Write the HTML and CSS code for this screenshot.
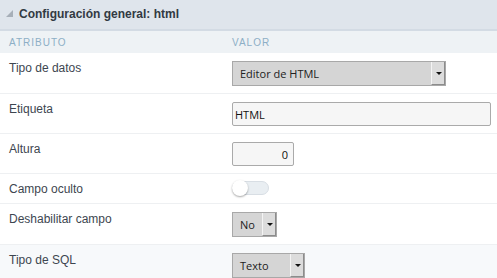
FILE: index.html
```html
<!DOCTYPE html>
<html lang="es">
<head>
    <meta charset="UTF-8">
    <meta name="viewport" content="width=device-width, initial-scale=1.0">
    <title>Configuración general: html</title>
    <link rel="stylesheet" href="styles.css">
</head>
<body>
    <div class="panel">
        <div class="panel-header">
            <svg class="collapse-icon" width="8" height="8" viewBox="0 0 8 8">
                <polygon points="7,0 7,7 0,7" fill="#a7afb8"/>
            </svg>
            <span class="panel-title">Configuración general: html</span>
        </div>

        <table class="props">
            <thead>
                <tr>
                    <th class="col-attr">Atributo</th>
                    <th>Valor</th>
                </tr>
            </thead>
            <tbody>
                <tr>
                    <td class="col-attr">Tipo de datos</td>
                    <td>
                        <div class="select select-wide">
                            <span class="select-text">Editor de HTML</span>
                            <span class="select-arrow"></span>
                        </div>
                    </td>
                </tr>
                <tr>
                    <td class="col-attr">Etiqueta</td>
                    <td><input type="text" class="text-input input-wide" value="HTML"></td>
                </tr>
                <tr>
                    <td class="col-attr">Altura</td>
                    <td><input type="text" class="text-input input-number" value="0"></td>
                </tr>
                <tr>
                    <td class="col-attr">Campo oculto</td>
                    <td>
                        <div class="toggle"><span class="toggle-knob"></span></div>
                    </td>
                </tr>
                <tr>
                    <td class="col-attr">Deshabilitar campo</td>
                    <td>
                        <div class="select select-small">
                            <span class="select-text">No</span>
                            <span class="select-arrow"></span>
                        </div>
                    </td>
                </tr>
                <tr class="row-alt">
                    <td class="col-attr">Tipo de SQL</td>
                    <td>
                        <div class="select select-medium">
                            <span class="select-text">Texto</span>
                            <span class="select-arrow"></span>
                        </div>
                    </td>
                </tr>
            </tbody>
        </table>
    </div>
</body>
</html>
```

FILE: styles.css
```css
body {
    margin: 0;
    font-family: "Liberation Sans", Arial, sans-serif;
    font-size: 12px;
    color: #3d4650;
    background: #fff;
}
.panel {
    width: 497px;
}
.panel-header {
    display: flex;
    align-items: center;
    height: 31px;
    padding-left: 6px;
    padding-bottom: 1px;
    background-color: #dfe5ec;
    border-bottom: 2px solid #d3dbe4;
    box-sizing: border-box;
}
.collapse-icon {
    margin-right: 5px;
}
.panel-title {
    font-weight: bold;
    font-size: 12px;
    color: #323a43;
}
.props {
    width: 100%;
    border-collapse: collapse;
    table-layout: fixed;
}
.props th {
    text-align: left;
    font-weight: normal;
    font-size: 10px;
    letter-spacing: 1px;
    text-transform: uppercase;
    color: #8dafc6;
    background-color: #eef2f5;
    height: 22px;
    padding: 0;
}
.props td {
    vertical-align: top;
    padding: 7px 0;
    border-bottom: 1px solid #eef0f2;
}
.props .col-attr {
    width: 232px;
    padding-left: 9px;
    box-sizing: border-box;
}
.props td.col-attr {
    padding-top: 8px;
}
.row-alt td {
    background-color: #f7f9fb;
    border-bottom: none;
}
.select {
    display: flex;
    align-items: stretch;
    height: 25px;
    background-color: #d5d5d5;
    border: 1px solid #a8a8a8;
    box-sizing: border-box;
    font-family: "Open Sans", sans-serif;
    font-size: 11px;
    color: #222;
    margin-top: 1px;
}
.select-text {
    flex: 1;
    display: flex;
    align-items: center;
    padding-left: 7px;
}
.select-arrow {
    width: 12px;
    border-left: 1px solid #f4f4f4;
    border-right: 1px solid #8c8c8c;
    border-bottom: 1px solid #8c8c8c;
    background-color: #dcdcdc;
    position: relative;
}
.select-arrow::after {
    content: "";
    position: absolute;
    left: 4px;
    top: 10px;
    border-left: 3px solid transparent;
    border-right: 3px solid transparent;
    border-top: 3px solid #111;
}
.select-wide {
    width: 214px;
}
.select-small {
    width: 45px;
}
.select-medium {
    width: 73px;
}
.text-input {
    display: block;
    height: 24px;
    box-sizing: border-box;
    margin: 1px 0 0 0;
    padding: 0 2px;
    border: 1px solid #aaaaaa;
    border-radius: 2px;
    background-color: #f6f6f6;
    font-family: "Open Sans", sans-serif;
    font-size: 11px;
    color: #111;
    outline: none;
}
.input-wide {
    width: 259px;
}
.input-number {
    width: 62px;
    text-align: right;
    padding-right: 5px;
}
.toggle {
    position: relative;
    width: 37px;
    height: 14px;
    border: 1px solid #d8dee4;
    border-radius: 8px;
    background-color: #e9eef2;
    box-sizing: border-box;
}
.toggle-knob {
    position: absolute;
    left: -1px;
    top: -2px;
    width: 16px;
    height: 16px;
    border-radius: 50%;
    background-color: #fff;
    box-shadow: 0 1px 2px rgba(0, 0, 0, 0.35);
}
```
